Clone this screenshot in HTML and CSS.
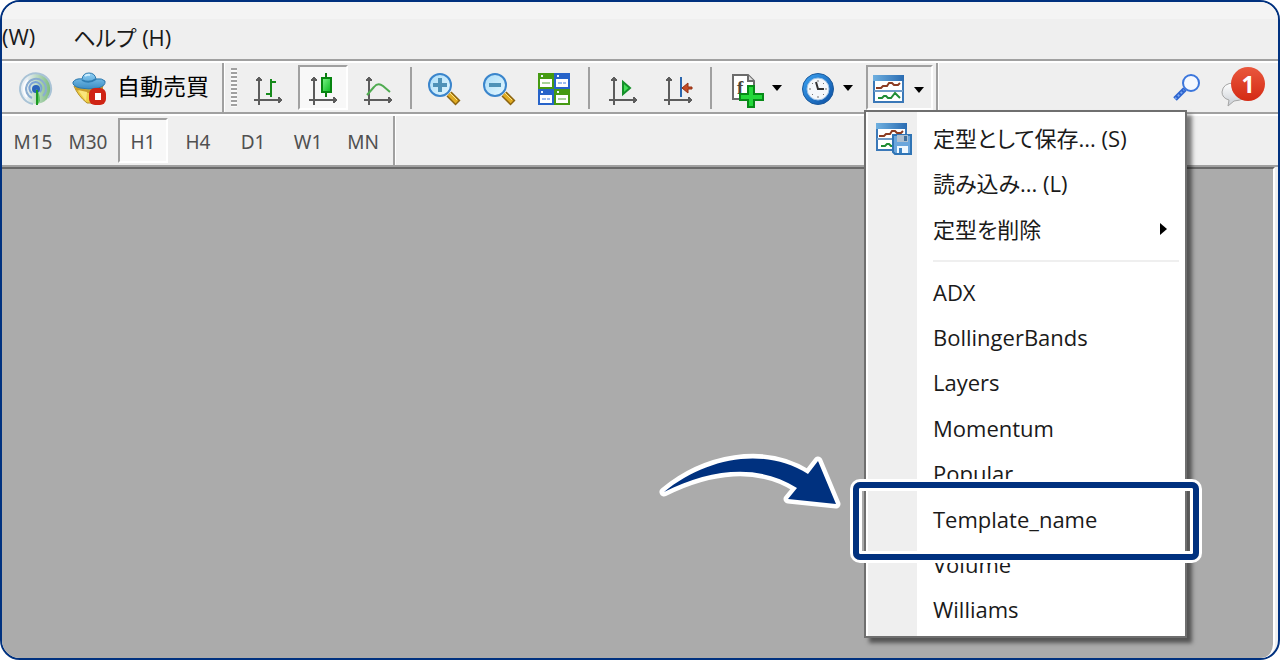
FILE: index.html
```html
<!DOCTYPE html>
<html lang="ja">
<head>
<meta charset="utf-8">
<meta name="viewport" content="width=device-width, initial-scale=1">
<title>定型メニュー</title>
<link rel="stylesheet" href="styles.css">
</head>
<body>
<svg class="defs" aria-hidden="true">
  <defs>
    <linearGradient id="title-blue" x1="0" x2="1" y1="0" y2="0"><stop offset="0" stop-color="#6fb0e0"/><stop offset="1" stop-color="#2a6cb2"/></linearGradient>
    <linearGradient id="lens" x1="0" x2="1" y1="0" y2="1"><stop offset="0" stop-color="#a9dcf8"/><stop offset="1" stop-color="#e6f8ff"/></linearGradient>
    <linearGradient id="candle" x1="0" x2="1" y1="0" y2="1"><stop offset="0" stop-color="#7df58a"/><stop offset="1" stop-color="#06b81c"/></linearGradient>
    <linearGradient id="signal-fill" x1="0" x2="1"><stop offset="0.2" stop-color="#e6eef5"/><stop offset="1" stop-color="#5cae5c"/></linearGradient>
    <linearGradient id="hat" x1="0" x2="0" y1="0" y2="1"><stop offset="0" stop-color="#8fd0f5"/><stop offset="1" stop-color="#3a8cc4"/></linearGradient>
    <linearGradient id="clock-ring" x1="0" x2="1" y1="0" y2="1"><stop offset="0" stop-color="#3da5f5"/><stop offset="1" stop-color="#0b4da0"/></linearGradient>
    <linearGradient id="bubble" x1="0" x2="0" y1="0" y2="1"><stop offset="0" stop-color="#ffffff"/><stop offset="1" stop-color="#c9ced4"/></linearGradient>
    <g id="axes" fill="none" stroke="#5c5c5c" stroke-width="2"><path d="M8 6v28M3 29h28M5 9h6M28 26v6"/><path d="M8 7v3M27 29h3" stroke-width="4"/></g>
    <g id="handle"><path d="M22 23l9 9" stroke="#8c6410" stroke-width="7"/><path d="M22 23l8 8" stroke="#e0ab22" stroke-width="4"/><path d="M23 22l7 7" stroke="#fbe68a" stroke-width="1"/></g>
    <g id="template"><path d="M2 5h29v26H2z" fill="#fff" stroke="#3a78b8" stroke-width="2"/><path d="M1 4h31v6H1z" fill="url(#title-blue)"/><path d="M2 20h29" stroke="#6f9cc8" stroke-width="2"/><path d="M4 17h5l2-2h4l2-3h3l2 2h4l2-2" fill="none" stroke="#8c3c22" stroke-width="2"/><path d="M6 27h4l2-2h2l2 2h3l4-5 5 5" fill="none" stroke="#1f8c34" stroke-width="2"/></g>
  </defs>
</svg>

<div class="window">
  <nav class="menubar" aria-label="メニュー">
    <button class="menubar-item" type="button">(W)</button>
    <button class="menubar-item" type="button">ヘルプ (H)</button>
  </nav>

  <div class="toolbar" role="toolbar" aria-label="標準">
    <button class="tool" type="button" aria-label="シグナル">
      <svg class="icon" viewBox="0 0 34 34"><circle cx="17" cy="18" r="15" fill="url(#signal-fill)" opacity=".8"/><g fill="none" stroke-width="2"><path d="M14 33A15.500 15.500 0 1 1 29 27" stroke="#a9c3d6"/><path d="M13 27a10 10 0 1 1 11-2" stroke="#8badd0"/><path d="M13 22a6 6 0 1 1 8-1" stroke="#7aa3d6"/></g><path d="M9 9a12 12 0 0 0-1 17" stroke="#fff" stroke-width="2" fill="none" opacity=".8"/><circle cx="17" cy="18" r="4" fill="#2b64bc"/><path d="M17 18q4 4 4 12l-2 3h-2z" fill="#5cc45e"/><path d="M18 19v15" stroke="#1d9a23" stroke-width="2"/></svg>
    </button>
    <button class="tool tool-wide" type="button">
      <svg class="icon" viewBox="0 0 34 34"><path d="M2 15q4 10 13 17h5l11-17z" fill="#eccd45" stroke="#b38d25" stroke-width="1"/><path d="M3 15q15 7 28 0v4q-15 6-27 0z" fill="#c99c2a"/><path d="M6 19l8 11 1-9z" fill="#fae57c"/><path d="M1 11q3-4 9-3 1-6 7-6 6 0 7 6 6-1 9 2 1 5-7 7-9 2-18 0-8-2-7-6z" fill="url(#hat)" stroke="#2b76ab" stroke-width="1"/><path d="M10 9q7 4 14-1" stroke="#2e7db3" fill="none" stroke-width="2"/><path d="M13 5q2-2 5-1" stroke="#cdeeff" fill="none" stroke-width="2"/><rect x="17" y="17" width="17" height="17" rx="6" fill="#cf2415"/><rect x="23" y="22" width="6" height="7" fill="#fff"/></svg>
      <span class="tool-label">自動売買</span>
    </button>
    <span class="divider divider-full"></span>
    <span class="grip"></span>
    <div class="tool-group">
      <button class="tool" type="button" aria-label="バーチャート"><svg class="icon" viewBox="0 0 34 34"><use href="#axes"/><path d="M20 8v18M20 11h5M15 23h5" stroke="#168a1b" stroke-width="2" fill="none"/></svg></button>
      <button class="tool pressed" type="button" aria-label="ローソク足" aria-pressed="true"><svg class="icon" viewBox="0 0 34 34"><use href="#axes"/><path d="M20 2v24" stroke="#0c7d12" stroke-width="2"/><rect x="16" y="7" width="9" height="14" fill="url(#candle)" stroke="#068510" stroke-width="2"/></svg></button>
      <button class="tool" type="button" aria-label="ラインチャート"><svg class="icon" viewBox="0 0 34 34"><use href="#axes"/><path d="M6 24l7-8q4-5 9-1l7 6" stroke="#4fab50" stroke-width="2" fill="none"/></svg></button>
    </div>
    <span class="divider"></span>
    <div class="tool-group">
      <button class="tool" type="button" aria-label="ズームイン"><svg class="icon" viewBox="0 0 34 34"><use href="#handle"/><circle cx="13" cy="14" r="11" fill="url(#lens)" stroke="#3a85cc" stroke-width="2"/><path d="M6 14h14M13 7v14" stroke="#4f92b8" stroke-width="4"/></svg></button>
      <button class="tool" type="button" aria-label="ズームアウト"><svg class="icon" viewBox="0 0 34 34"><use href="#handle"/><circle cx="13" cy="14" r="11" fill="url(#lens)" stroke="#3a85cc" stroke-width="2"/><path d="M7 14h12" stroke="#4f92b8" stroke-width="4"/></svg></button>
      <button class="tool" type="button" aria-label="ウィンドウの整列"><svg class="icon" viewBox="0 0 34 34"><path d="M1 2h16v16H1zM17 18h16v16H17z" fill="#459a12"/><path d="M17 2h16v16H17zM1 18h16v16H1z" fill="#2763c9"/><path d="M3 8h12v8H3zM19 8h12v8H19zM3 24h12v8H3zM19 24h12v8H19z" fill="#fff"/><path d="M5 12h8M21 28h8" stroke="#a9d39a" stroke-width="2"/><path d="M21 12h8M5 28h8" stroke="#9fbdf0" stroke-width="2" stroke-dasharray="4 1"/><path d="M4 5h2M20 5h2M4 21h2M20 21h2" stroke="#e8f2ff" stroke-width="2"/></svg></button>
    </div>
    <span class="divider divider-wide"></span>
    <div class="tool-group">
      <button class="tool" type="button" aria-label="自動スクロール"><svg class="icon" viewBox="0 0 34 34"><use href="#axes"/><path d="M17 11v12l7-6z" fill="#43df58" stroke="#15902a" stroke-width="2"/></svg></button>
      <button class="tool" type="button" aria-label="チャートシフト"><svg class="icon" viewBox="0 0 34 34"><use href="#axes"/><path d="M20 6v20" stroke="#2b66ad" stroke-width="2"/><path d="M21 17l6-5v4h4v2h-4v4z" fill="#c44c26" stroke="#943113" stroke-width="1"/></svg></button>
    </div>
    <span class="divider"></span>
    <div class="tool-group tool-group-drop">
      <button class="tool tool-drop" type="button" aria-label="インディケータ"><svg class="icon" viewBox="0 0 34 34"><path d="M3 4h15l6 6v18H3z" fill="#fff" stroke="#6c6c6c" stroke-width="2"/><path d="M18 4v6h6" fill="#ddd" stroke="#6c6c6c" stroke-width="2"/><text class="icon-letter" x="7" y="23">f</text><path d="M18 15h6v8h9v6h-9v7h-6v-7h-8v-6h8z" fill="#24d83a" stroke="#078a18" stroke-width="2"/></svg><span class="caret"></span></button>
      <button class="tool tool-drop" type="button" aria-label="期間"><svg class="icon" viewBox="0 0 34 34"><circle cx="17" cy="18" r="15.500" fill="url(#clock-ring)" stroke="#1c5a9c"/><circle cx="17" cy="18" r="11" fill="#f4f7fa" stroke="#9dc3e6"/><path d="M15 11l2 7h6" stroke="#333" stroke-width="2" fill="none"/><path d="M17 9v2M17 25v2M8 18h2M24 18h2M11 12l1 1M23 12l-1 1M11 24l1-1M23 24l-1-1" stroke="#777" stroke-width="1"/></svg><span class="caret"></span></button>
      <div class="dropdown">
        <button class="tool tool-drop pressed-flat" type="button" aria-label="定型" aria-haspopup="menu" aria-expanded="true"><svg class="icon" viewBox="0 0 34 34"><use href="#template"/></svg><span class="caret"></span></button>
        <div class="menu">
          <ul class="menu-list menu-commands">
            <li><button class="menu-item" type="button"><svg class="menu-icon" viewBox="0 0 38 38"><use href="#template"/><path d="M18 16h18v19H20l-2-2z" fill="#6ba6dc" stroke="#2f74b5" stroke-width="2"/><path d="M22 16h11v7H22z" fill="#aebfd0"/><path d="M29 17h3v5h-3z" fill="#3f6f9c"/><path d="M22 27h11v7H22z" fill="#f0f8ff"/><path d="M24 29h3v5h-3z" fill="#3b82c2"/></svg><span class="menu-label">定型として保存... (S)</span></button></li>
            <li><button class="menu-item" type="button"><span class="menu-label">読み込み... (L)</span></button></li>
            <li><button class="menu-item" type="button"><span class="menu-label">定型を削除</span><span class="submenu-arrow"></span></button></li>
          </ul>
          <ul class="menu-list menu-templates">
            <li><button class="menu-item" type="button"><span class="menu-label">ADX</span></button></li>
            <li><button class="menu-item" type="button"><span class="menu-label">BollingerBands</span></button></li>
            <li><button class="menu-item" type="button"><span class="menu-label">Layers</span></button></li>
            <li><button class="menu-item" type="button"><span class="menu-label">Momentum</span></button></li>
            <li><button class="menu-item" type="button"><span class="menu-label">Popular</span></button></li>
            <li class="marked"><button class="menu-item" type="button"><span class="menu-label">Template_name</span></button>
              <svg class="pointer" viewBox="0 0 184 60" aria-hidden="true"><path d="M8 40C49 6 108-6 152 22l10-13 18 43-48-5 9-11C102 11 54 17 8 40z" fill="#00317f" stroke="#fff" stroke-width="9" stroke-linejoin="round" paint-order="stroke"/></svg>
            </li>
            <li><button class="menu-item" type="button"><span class="menu-label">Volume</span></button></li>
            <li><button class="menu-item" type="button"><span class="menu-label">Williams</span></button></li>
          </ul>
        </div>
      </div>
    </div>
    <span class="divider divider-full divider-end"></span>
    <div class="tool-group tool-group-right">
      <button class="tool" type="button" aria-label="検索"><svg class="icon" viewBox="0 0 34 34"><path d="M5 28l10-10" stroke="#2f66d0" stroke-width="5"/><path d="M5 28l9-9" stroke="#78a5ef" stroke-width="2" stroke-dasharray="2 2"/><circle cx="21" cy="12" r="8" fill="#f4f8ff" stroke="#3b76dc" stroke-width="2"/></svg></button>
      <button class="tool tool-chat" type="button" aria-label="通知"><svg class="icon" viewBox="0 0 34 34"><path d="M14 12q13 0 14 9-1 8-14 9l-6 5 1-6q-7-2-7-8 1-9 12-9z" fill="url(#bubble)" stroke="#a5a5a5" stroke-width="1"/></svg><span class="badge">1</span></button>
    </div>
  </div>

  <div class="timeframes" role="toolbar" aria-label="時間足">
    <button class="frame" type="button">M15</button>
    <button class="frame" type="button">M30</button>
    <button class="frame pressed" type="button" aria-pressed="true">H1</button>
    <button class="frame" type="button">H4</button>
    <button class="frame" type="button">D1</button>
    <button class="frame" type="button">W1</button>
    <button class="frame" type="button">MN</button>
    <span class="divider divider-full"></span>
  </div>

  <main class="workspace"></main>
</div>
</body>
</html>
```

FILE: styles.css
```css
* { box-sizing: border-box; }

body {
  margin: 0;
  background: #fff;
  color: #1a1a1a;
  font-family: "Open Sans", "Noto Sans CJK JP", sans-serif;
}

button {
  border: 0;
  padding: 0;
  background: none;
  color: inherit;
  font: inherit;
  white-space: nowrap;
}

.defs { position: absolute; width: 0; height: 0; }

.window {
  display: flex;
  flex-direction: column;
  min-height: 100vh;
  border: 2px solid #00317f;
  border-radius: 20px;
  background: #efefef;
}

/* Menu bar */
.menubar {
  display: flex;
  gap: 38px;
  height: 59px;
  padding-top: 14px;
  border-bottom: 2px solid #a0a0a0;
  border-radius: 18px 18px 0 0;
  background: linear-gradient(#f4f4f4 17px, #efefef 17px);
}

.menubar-item {
  height: 40px;
  font-size: 22px;
  font-feature-settings: "palt";
}

/* Main toolbar */
.toolbar {
  display: flex;
  align-items: center;
  height: 53px;
  padding-left: 9px;
  border-top: 2px solid #fff;
  border-bottom: 2px solid #a0a0a0;
}

.tool-group { display: flex; gap: 5px; }
.tool-group-drop { margin-left: 5px; gap: 4px; }
.tool-group-right { margin-left: auto; margin-right: 10px; gap: 0; }

.tool {
  display: flex;
  align-items: center;
  justify-content: center;
  width: 50px;
  height: 45px;
}

.tool-wide {
  justify-content: flex-start;
  gap: 11px;
  width: 150px;
  margin-left: 11px;
  color: #000;
  font-size: 23px;
}

.tool-label { padding-bottom: 5px; }

.tool-drop { width: 67px; gap: 8px; padding-right: 3px; }
.tool-chat { position: relative; width: 56px; justify-content: flex-start; padding-left: 8px; }

.icon { width: 34px; height: 34px; flex: none; overflow: visible; }
.icon-letter { font: bold 19px "Liberation Serif", serif; fill: #4a4436; }

.pressed {
  border: 2px solid #a0a0a0;
  border-right-color: #fff;
  border-bottom-color: #fff;
  background: #f8f8f8;
}

.pressed-flat {
  border: 2px solid #a0a0a0;
  border-right-color: #fff;
  border-bottom-color: #fff;
}

.caret {
  width: 0;
  border: 5px solid transparent;
  border-top: 6px solid #000;
  border-bottom: 0;
}

.pressed-flat .caret { margin-top: 4px; }

.divider {
  width: 2px;
  height: 42px;
  margin: 0 7px;
  background: #a0a0a0;
}

.divider-wide { margin: 0 8px 0 9px; }

.divider-full {
  height: 49px;
  margin: 0;
  border-right: 1px solid #fff;
  width: 3px;
}

.divider-end { margin-left: 3px; }

.grip {
  width: 6px;
  height: 39px;
  margin: 0 6px;
  background: repeating-linear-gradient(#a0a0a0 0 2px, #fafafa 2px 4px);
}

.badge {
  position: absolute;
  top: 2px;
  left: 19px;
  width: 34px;
  height: 34px;
  border-radius: 50%;
  background: linear-gradient(#e9573d, #d42a14);
  color: #fff;
  font: bold 23px/34px "Open Sans", sans-serif;
  text-align: center;
}

/* Timeframe toolbar */
.timeframes {
  display: flex;
  align-items: center;
  gap: 5px;
  height: 53px;
  padding-left: 6px;
  border-top: 2px solid #fff;
  border-bottom: 2px solid #a0a0a0;
}

.frame {
  width: 50px;
  height: 45px;
  padding-top: 2px;
  color: #505050;
  font: 19px "Noto Sans", sans-serif;
}

.workspace {
  flex: 1;
  margin-right: 3px;
  border-top: 2px solid #696969;
  border-right: 2px solid #fff;
  border-radius: 0 0 14px 18px;
  background: #ababab;
}

/* Template menu */
.dropdown { position: relative; }

.menu {
  position: absolute;
  z-index: 1;
  top: 45px;
  left: -2px;
  width: 323px;
  padding: 3px 0 4px;
  border: 2px solid #6f6f6f;
  background: linear-gradient(90deg, #fff 2px, #efefef 2px 51px, #fff 51px);
  box-shadow: 5px 5px 4px rgba(0, 0, 0, 0.5);
}

.menu-list {
  display: grid;
  grid-auto-rows: 1fr;
  margin: 0;
  padding: 0;
  list-style: none;
}

.menu-commands { height: 137px; }

.menu-templates {
  position: relative;
  height: 380px;
  padding-top: 17px;
}

.menu-templates::before {
  content: "";
  position: absolute;
  top: 8px;
  right: 6px;
  left: 67px;
  height: 2px;
  background: #efefef;
}

.menu-item {
  display: grid;
  grid-template-columns: 67px 1fr auto;
  align-items: center;
  width: 100%;
  height: 100%;
  font-size: 22px;
  line-height: 32px;
  text-align: left;
  font-feature-settings: "palt";
}

.menu-icon { width: 38px; height: 38px; margin-left: 9px; }
.menu-label { grid-column: 2; }

.submenu-arrow {
  margin-right: 18px;
  border: 6px solid transparent;
  border-left: 7px solid #000;
  border-right: 0;
}

.marked { position: relative; z-index: 2; }

.marked::after {
  content: "";
  position: absolute;
  inset: -14px -14px -19px -13px;
  border: 6px solid #00317f;
  border-radius: 7px;
  box-shadow: 0 0 0 3px #fff, inset 0 0 0 3px #fff;
}

.pointer {
  position: absolute;
  top: -44px;
  left: -210px;
  width: 184px;
  height: 60px;
  overflow: visible;
}
```
